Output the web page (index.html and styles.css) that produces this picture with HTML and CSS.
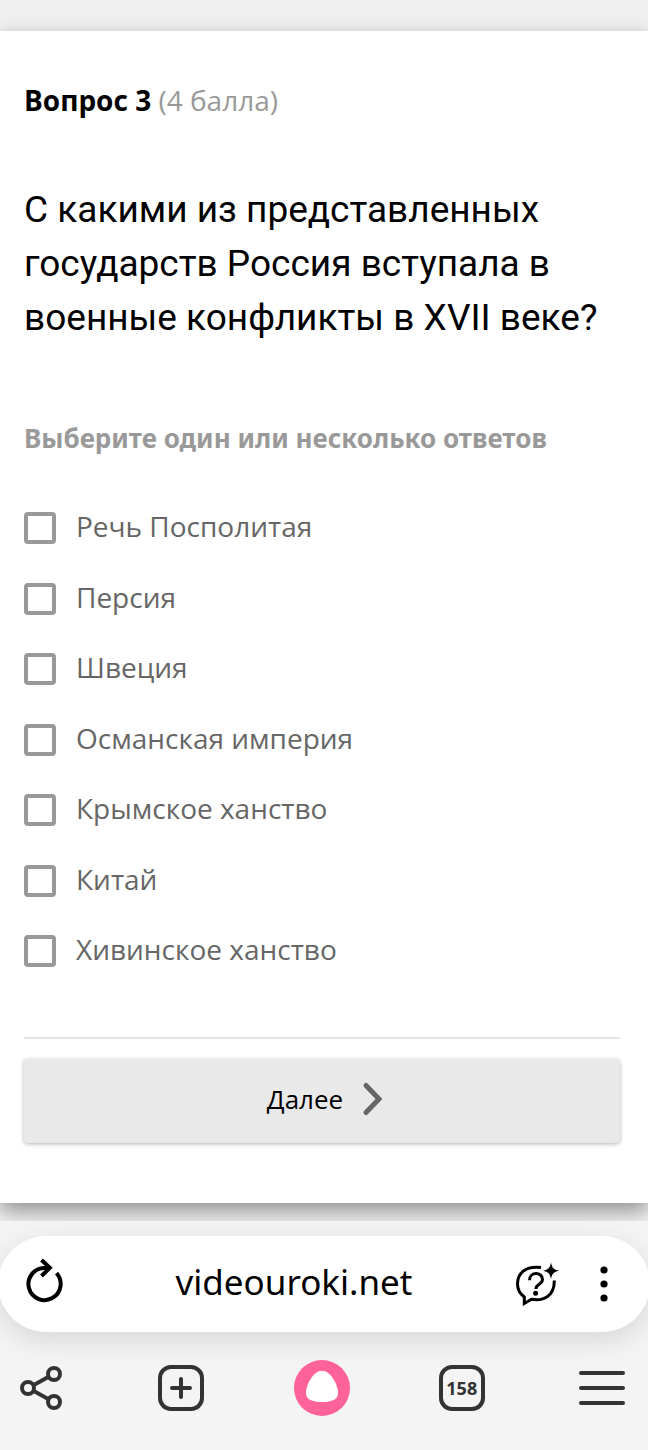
FILE: index.html
```html
<!DOCTYPE html>
<html lang="ru">
<head>
    <meta charset="UTF-8">
    <meta name="viewport" content="width=device-width, initial-scale=1.0">
    <title>Вопрос 3</title>
    <link rel="stylesheet" href="styles.css">
</head>
<body>
    <main class="page">
      <form class="card">
        <p class="questionNumber"><b>Вопрос 3</b> <span class="points">(4 балла)</span></p>
        <h1>С какими из представленных государств Россия вступала в военные конфликты в XVII веке?</h1>
        <h2 id="hint">Выберите один или несколько ответов</h2>
        <div class="answers" role="group" aria-labelledby="hint">
          <label class="answer"><input type="checkbox" name="answer" value="1"><span>Речь Посполитая</span></label>
          <label class="answer"><input type="checkbox" name="answer" value="2"><span>Персия</span></label>
          <label class="answer"><input type="checkbox" name="answer" value="3"><span>Швеция</span></label>
          <label class="answer"><input type="checkbox" name="answer" value="4"><span>Османская империя</span></label>
          <label class="answer"><input type="checkbox" name="answer" value="5"><span>Крымское ханство</span></label>
          <label class="answer"><input type="checkbox" name="answer" value="6"><span>Китай</span></label>
          <label class="answer"><input type="checkbox" name="answer" value="7"><span>Хивинское ханство</span></label>
        </div>
        <hr>
        <button class="nextButton" type="button">
          <span>Далее</span>
          <svg width="20" height="34" viewBox="0 0 20 34" fill="none" stroke="#666" stroke-width="5" stroke-linecap="round">
            <path d="M3 3.500L16 17L3 30.500"/>
          </svg>
        </button>
      </form>
    </main>

    <!-- browser panel -->
    <footer class="browser">
      <div class="addressBar">
        <button class="iconButton" type="button" aria-label="Обновить">
          <svg width="44" height="48" viewBox="22 1260 44 48" fill="none" stroke="#000" stroke-width="4">
            <path d="M50 1267.900H44A16.100 16.100 0 1 0 56.500 1273.200"/>
            <path d="M41.500 1260L49.800 1267.800L41.500 1276"/>
          </svg>
        </button>
        <button class="url" type="button">videouroki.net</button>
        <button class="iconButton" type="button" aria-label="Спросить">
          <svg width="44" height="48" viewBox="514 1260 44 48" fill="none" stroke="#000" stroke-width="3">
            <path d="M541 1267.600C526 1265.500 517.500 1273 517.500 1284C517.500 1289 519.500 1293.500 524.300 1297V1303.500L531.500 1299.300C544 1301.500 554.500 1295.500 554.300 1280.500"/>
            <path d="M529.500 1280.200C529.500 1271.500 542.500 1271.500 542.500 1279.500C542.500 1284.500 535.800 1284 535.800 1289"/>
            <circle cx="535.600" cy="1293.300" r="2.500" fill="#000" stroke="none"/>
            <path fill="#000" stroke="none" d="M551 1262.500C552.200 1268 553.500 1269.500 559 1270.700C553.500 1271.900 552.200 1273.300 551 1279C549.800 1273.300 548.500 1271.900 543 1270.700C548.500 1269.500 549.800 1268 551 1262.500Z"/>
          </svg>
        </button>
        <button class="iconButton" type="button" aria-label="Ещё">
          <svg width="10" height="48" viewBox="0 0 10 48">
            <circle cx="5" cy="10" r="3.600"/>
            <circle cx="5" cy="24" r="3.600"/>
            <circle cx="5" cy="38" r="3.600"/>
          </svg>
        </button>
      </div>
      <nav class="toolbar">
        <button class="iconButton" type="button" aria-label="Поделиться">
          <svg width="44" height="46" viewBox="19 1365 44 46" fill="none" stroke="#333" stroke-width="4">
            <circle cx="28" cy="1388" r="6"/>
            <circle cx="54" cy="1374" r="6"/>
            <circle cx="54" cy="1402" r="6"/>
            <path d="M33.300 1385.200L48.700 1376.800M33.300 1390.800L48.700 1399.200"/>
          </svg>
        </button>
        <button class="iconButton" type="button" aria-label="Новая вкладка">
          <svg width="46" height="46" viewBox="0 0 46 46" fill="none" stroke="#333" stroke-width="4" stroke-linecap="round">
            <rect x="2" y="2" width="42" height="42" rx="11"/>
            <path d="M23 14V32M14 23H32"/>
          </svg>
        </button>
        <button class="iconButton" type="button" aria-label="Алиса">
          <svg width="56" height="56" viewBox="0 0 56 56">
            <circle cx="28" cy="28" r="28" fill="#ff6199"/>
            <path fill="#fff" d="M28 10.800C36.500 10.800 44 24.500 44 33C44 39.500 38 42 28 42C18 42 12 39.500 12 33C12 24.500 19.500 10.800 28 10.800Z"/>
          </svg>
        </button>
        <button class="iconButton" type="button" aria-label="Вкладки">
          <span class="tabCount">158</span>
        </button>
        <button class="iconButton" type="button" aria-label="Меню">
          <svg width="48" height="46" viewBox="0 0 48 46" stroke="#333" stroke-width="4" stroke-linecap="round">
            <path d="M3 8H45M3 23H45M3 38H45"/>
          </svg>
        </button>
      </nav>
    </footer>
</body>
</html>
```
FILE: styles.css
```css
* {
    box-sizing: border-box;
}
body {
    margin: 0;
    font: 28px/36px "Open Sans", "Noto Sans", sans-serif;
    color: #000;
    background-color: #f4f4f4;
    overflow-x: hidden;
}
button {
    margin: 0;
    padding: 0;
    border: none;
    font: inherit;
    color: inherit;
    background: none;
}
svg {
    display: block;
    overflow: visible;
}
h1, h2, p {
    margin: 0;
}
.page {
    padding: 31px 0 18px;
    background-color: #f0f0f0;
    overflow: hidden;
}
.card {
    padding: 51px 28px 60px 24px;
    background-color: #fff;
    box-shadow: 0 8px 20px rgba(0, 0, 0, 0.4);
}
.points {
    color: #999;
}
h1 {
    margin-top: 65px;
    font: 37px/54px Roboto, sans-serif;
}
h2 {
    margin-top: 75px;
    font-family: "Noto Sans", sans-serif;
    font-size: 26px;
    line-height: 36px;
    color: #999;
}
.answers {
    display: flex;
    flex-direction: column;
    justify-content: space-between;
    min-height: 463px;
    margin-top: 52px;
}
.answer {
    display: flex;
    align-items: center;
    gap: 20px;
    color: #666;
}
.answer span {
    padding-bottom: 4px;
}
.answer input {
    appearance: none;
    width: 32px;
    height: 32px;
    margin: 0;
    border: 4px solid #999;
    border-radius: 4px;
    background-color: #fff;
}
.answer input:checked {
    background-color: #999;
}
hr {
    margin: 66px 0 20px;
    border: none;
    border-top: 2px solid #e5e5e5;
}
.nextButton {
    display: flex;
    justify-content: center;
    align-items: center;
    gap: 20px;
    width: 100%;
    height: 84px;
    padding: 0 0 4px 6px;
    border-radius: 4px;
    font-size: 26px;
    background-color: #e9e9e9;
    box-shadow: 0 1px 4px rgba(0, 0, 0, 0.3);
}
.browser {
    padding: 15px 0 34px;
}
.addressBar {
    display: flex;
    align-items: center;
    height: 96px;
    margin: 0 -2px;
    padding: 0 41px 0 24px;
    border-radius: 48px;
    background-color: #fff;
    box-shadow: 0 8px 28px rgba(0, 0, 0, 0.12);
}
.url {
    flex: 1;
    padding: 0 0 4px 8px;
    font-family: "Noto Sans", sans-serif;
    font-size: 35px;
    line-height: 48px;
}
.addressBar .iconButton + .iconButton {
    margin-left: 41px;
}
.toolbar {
    display: flex;
    justify-content: space-between;
    align-items: center;
    padding: 28px 18px 0 13px;
}
.toolbar .iconButton {
    display: flex;
    justify-content: center;
    align-items: center;
    width: 56px;
    height: 56px;
}
.tabCount {
    width: 46px;
    height: 46px;
    border: 4px solid #333;
    border-radius: 13px;
    font-size: 18px;
    font-weight: bold;
    line-height: 38px;
    text-align: center;
    color: #333;
}
```
